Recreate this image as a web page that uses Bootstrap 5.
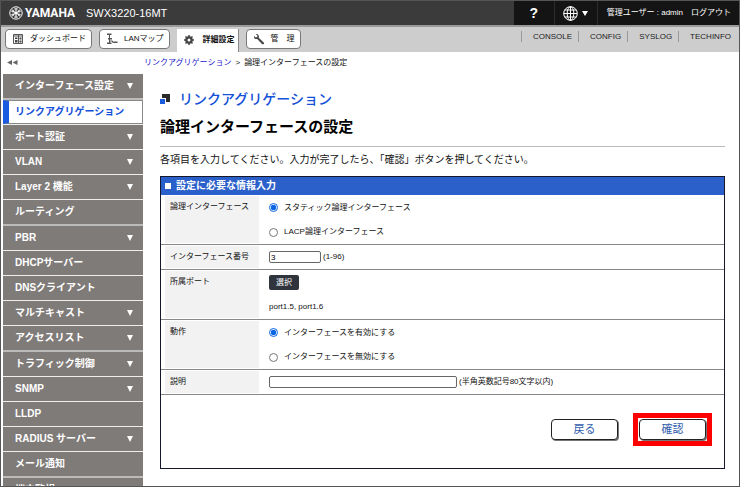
<!DOCTYPE html>
<html lang="ja">
<head>
<meta charset="utf-8">
<meta name="viewport" content="width=device-width, initial-scale=1">
<title>SWX3220-16MT</title>
<link href="https://cdn.jsdelivr.net/npm/bootstrap@5.3.0/dist/css/bootstrap.min.css" rel="stylesheet">
<style>
  body { font-family: "Liberation Sans", "Noto Sans CJK JP", sans-serif; font-size: 8px; line-height: 12px; color: #111; background: #fff; }
  a { text-decoration: none; }
  .frame { border: 1px solid #555; }
  .topbar { height: 24px; background: #3b3b3b; color: #fff; }
  .brand-mark { width: 14px; height: 14px; }
  .brand-name { font-family: Roboto, "Liberation Sans", sans-serif; font-size: 12px; font-weight: 700; width: 53px; margin-left: 2px; }
  .model { font-size: 11px; margin-left: 8px; }
  .tools { background: #141414; }
  .tool-btn { border: 0; border-right: 1px solid #2c2c2c; background: transparent; color: #fff; padding: 0; }
  .help { width: 41px; font-size: 14px; font-weight: 700; }
  .lang { width: 43px; }
  .user { padding: 0 8px 0 9px; gap: 8px; }
  .tabs { height: 27px; background: #cdcdcd; border-top: 2px solid #9a9a9a; padding: 2px 8px 0 4px; gap: 7px; }
  .tab { height: 20px; background: #fff; border: 1px solid #777; border-radius: 4px; color: #111; gap: 6px; padding: 0 5px 0 6px; }
  .tab svg { width: 12px; height: 12px; flex: none; }
  .tab-on { height: 23px; border: 0; border-right: 1px solid #888; border-radius: 0; font-weight: 700; padding: 0 3px 2px 6px; gap: 8px; }
  .links { height: 14px; }
  .links a { color: #222; line-height: 11px; border-left: 1px solid #999; padding-left: 11px; margin-left: 6px; }
  .side { width: 142px; padding-left: 2px; }
  .fold { height: 22px; border: 0; background: transparent; padding: 0 4px; text-align: left; }
  .menu { font-size: 10px; font-weight: 700; overflow-y: auto; scrollbar-width: none; }
  .menu::-webkit-scrollbar { display: none; }
  .menu li { border-bottom: 1px solid #eee; flex: none; }
  .menu li:nth-child(5n+1) { border-bottom: 2px solid #bbb; }
  .menu a { height: 24px; background: #7f7b79; color: #fff; padding: 0 10px 0 12px; }
  .menu a.here { background: #fff; color: #1450d8; border: 1px solid #888; border-left: 6px solid #1b5be0; padding-left: 6px; }
  .crumbs { height: 22px; padding-left: 1px; }
  .crumbs a { color: #1a1acc; }
  .content { padding: 15px 14px 16px 17px; }
  .page-name { font-size: 14px; line-height: 20px; color: #1450d8; gap: 9px; margin: 0; font-weight: 500; }
  .page-name svg { width: 10px; height: 10px; }
  .page-title { font-size: 15px; line-height: 20px; font-weight: 700; margin: 8px 0 9px; color: #000; }
  .lead-in { font-size: 10px; line-height: 14px; border-top: 1px solid #bbb; padding: 6px 0 9px; margin: 0; }
  .panel { border: 1px solid #14182a; }
  .panel-head { background: #2b5fc9; color: #fff; font-size: 10px; font-weight: 700; line-height: 18px; gap: 5px; padding-left: 4px; margin: 0; }
  .sq { width: 6px; height: 6px; background: #fff; }
  .form-row { border-bottom: 1px solid #888; padding-left: 4px; }
  .form-key { width: 94px; background: #f2f2f2; padding: 0 5px; line-height: 22px; margin: 1px 0; }
  .form-val { padding-left: 10px; }
  .ln { height: 25px; }
  .ln:last-child { height: 24px; }
  .ln input[type=radio] { width: 9px; height: 9px; margin: 0 6px 0 0; accent-color: #0b66e4; }
  .box { height: 12px; border: 1px solid #666; border-radius: 2px; padding: 0 1px; font-size: 8px; line-height: 10px; margin-right: 2px; }
  .num { width: 52px; }
  .desc { width: 188px; }
  .pick { width: 30px; height: 15px; border: 0; border-radius: 2px; background: #30343c; color: #fff; padding: 0; }
  .actions { padding: 24px 18px 28px; gap: 21px; }
  .act { width: 67px; height: 21px; border: 1px solid #222; border-radius: 4px; background: #fff; color: #2f5dab; font-size: 11px; line-height: 19px; padding: 0; box-shadow: 1px 1px 0 #777; }
  .spot { outline: 5px solid #f00; outline-offset: 1px; }
</style>
<script src="https://cdn.jsdelivr.net/npm/bootstrap@5.3.0/dist/js/bootstrap.bundle.min.js"></script>
</head>
<body>
<div class="frame vh-100 d-flex flex-column overflow-hidden">
  <header class="topbar d-flex flex-shrink-0">
    <div class="d-flex align-items-center ps-2 flex-fill">
      <svg class="brand-mark" viewBox="0 0 14 14" fill="none" stroke="#fff"><circle cx="7" cy="7" r="6.2" stroke-width="1"/><path d="M7 7V2M7 7l4.3-2.5M7 7l4.3 2.5M7 7v5M7 7L2.7 9.5M7 7L2.7 4.5" stroke-width="1.1"/><path d="M6 2v2M8 2v2M6 12v-2M8 12v-2M2.3 5.3l2 1M3.4 3.8l1.7 1M11.7 5.3l-2 1M10.6 3.8l-1.7 1M2.3 8.7l2-1M3.4 10.2l1.7-1M11.7 8.7l-2-1M10.6 10.2l-1.7-1" stroke-width=".7"/></svg>
      <span class="brand-name">YAMAHA</span>
      <span class="model">SWX3220-16MT</span>
    </div>
    <div class="tools d-flex">
      <button type="button" class="tool-btn help">?</button>
      <button type="button" class="tool-btn lang d-flex align-items-center justify-content-center gap-1" aria-label="Language">
        <svg width="15" height="15" viewBox="0 0 15 15" fill="none" stroke="#fff" stroke-width="1"><circle cx="7.500" cy="7.500" r="6.800"/><ellipse cx="7.500" cy="7.500" rx="3.300" ry="6.800"/><path d="M7.500 .7v13.600M.7 7.500h13.600M1.700 4h11.600M1.700 11h11.600"/></svg>
        <svg width="6" height="5" viewBox="0 0 6 5"><path d="M0 0h6L3 5z" fill="#fff"/></svg>
      </button>
      <div class="user d-flex align-items-center"><span>管理ユーザー : admin</span><a href="#" class="text-white">ログアウト</a></div>
    </div>
  </header>

  <nav class="tabs d-flex flex-shrink-0">
    <a href="#" class="tab d-flex align-items-center"><svg viewBox="0 0 12 12"><path d="M1.500 1.500h9v9h-9z" fill="#fff" stroke="#555"/><path d="M1 3h10M6.500 2v9" stroke="#555"/><path d="M3 4.500h2.500v1.500H3zM3 7h2.500v2.500H3zM7.500 4.500h2v2h-2zM7.500 7.500h2v2h-2z" fill="#444"/></svg>ダッシュボード</a>
    <a href="#" class="tab d-flex align-items-center"><svg viewBox="0 0 12 12"><path d="M1 .5h4.500v1.500H1zM2 5h4v1.500H2zM1 9.500h4.500V11H1zM7.500 8.500h4V10h-4z" fill="#555"/><path d="M3.500 1.500v8.500M3.500 8h3v1.300h2" stroke="#555" fill="none"/></svg>LANマップ</a>
    <a href="#" class="tab tab-on d-flex align-items-center" aria-current="page"><svg viewBox="0 0 12 12" fill="none" stroke="#444"><circle cx="6" cy="6" r="2.800" stroke-width="2"/><path d="M6 1v10M1 6h10M2.500 2.500l7 7M9.500 2.500l-7 7" stroke-width="1.500"/><circle cx="6" cy="6" r="1.500" fill="#fff" stroke="none"/></svg>詳細設定</a>
    <a href="#" class="tab d-flex align-items-center"><svg viewBox="0 0 12 12"><path d="M3 1.200l1.500 1.500-.4 1.400-1.400.4L1.200 3C.7 4.500 1.300 5.700 2.400 6c.7.200 1.300.1 1.800-.1L9 11c.6.500 1.300.400 1.700 0 .4-.400.5-1 0-1.500L5.700 4.800c.3-.7.300-1.400 0-2.100C5.200 1.500 4.100.9 3 1.200z" fill="#444"/></svg>管　理</a>
    <div class="links d-flex align-items-center ms-auto">
      <a href="#">CONSOLE</a><a href="#">CONFIG</a><a href="#">SYSLOG</a><a href="#">TECHINFO</a>
    </div>
  </nav>

  <div class="d-flex flex-fill overflow-hidden">
    <aside class="side d-flex flex-column flex-shrink-0">
      <button type="button" class="fold flex-shrink-0" aria-label="メニューを閉じる"><svg width="11" height="5" viewBox="0 0 11 5"><path d="M5 0v5L0 2.500zM10.500 0v5l-5-2.500z" fill="#666"/></svg></button>
      <ul class="menu list-unstyled m-0 d-flex flex-column flex-fill">
        <li><a href="#" class="d-flex align-items-center justify-content-between">インターフェース設定<svg width="6" height="6" viewBox="0 0 6 6"><path d="M0 0h6L3 6z" fill="#fff"/></svg></a></li>
        <li><a href="#" class="here d-flex align-items-center">リンクアグリゲーション</a></li>
        <li><a href="#" class="d-flex align-items-center justify-content-between">ポート認証<svg width="6" height="6" viewBox="0 0 6 6"><path d="M0 0h6L3 6z" fill="#fff"/></svg></a></li>
        <li><a href="#" class="d-flex align-items-center justify-content-between">VLAN<svg width="6" height="6" viewBox="0 0 6 6"><path d="M0 0h6L3 6z" fill="#fff"/></svg></a></li>
        <li><a href="#" class="d-flex align-items-center justify-content-between">Layer 2 機能<svg width="6" height="6" viewBox="0 0 6 6"><path d="M0 0h6L3 6z" fill="#fff"/></svg></a></li>
        <li><a href="#" class="d-flex align-items-center">ルーティング</a></li>
        <li><a href="#" class="d-flex align-items-center justify-content-between">PBR<svg width="6" height="6" viewBox="0 0 6 6"><path d="M0 0h6L3 6z" fill="#fff"/></svg></a></li>
        <li><a href="#" class="d-flex align-items-center">DHCPサーバー</a></li>
        <li><a href="#" class="d-flex align-items-center">DNSクライアント</a></li>
        <li><a href="#" class="d-flex align-items-center justify-content-between">マルチキャスト<svg width="6" height="6" viewBox="0 0 6 6"><path d="M0 0h6L3 6z" fill="#fff"/></svg></a></li>
        <li><a href="#" class="d-flex align-items-center justify-content-between">アクセスリスト<svg width="6" height="6" viewBox="0 0 6 6"><path d="M0 0h6L3 6z" fill="#fff"/></svg></a></li>
        <li><a href="#" class="d-flex align-items-center justify-content-between">トラフィック制御<svg width="6" height="6" viewBox="0 0 6 6"><path d="M0 0h6L3 6z" fill="#fff"/></svg></a></li>
        <li><a href="#" class="d-flex align-items-center justify-content-between">SNMP<svg width="6" height="6" viewBox="0 0 6 6"><path d="M0 0h6L3 6z" fill="#fff"/></svg></a></li>
        <li><a href="#" class="d-flex align-items-center">LLDP</a></li>
        <li><a href="#" class="d-flex align-items-center justify-content-between">RADIUS サーバー<svg width="6" height="6" viewBox="0 0 6 6"><path d="M0 0h6L3 6z" fill="#fff"/></svg></a></li>
        <li><a href="#" class="d-flex align-items-center">メール通知</a></li>
        <li><a href="#" class="d-flex align-items-center">端末監視</a></li>
      </ul>
    </aside>

    <main class="flex-fill overflow-auto">
      <div class="crumbs d-flex align-items-center gap-1"><a href="#">リンクアグリゲーション</a><span>&gt;</span><span>論理インターフェースの設定</span></div>
      <div class="content">
        <h1 class="page-name d-flex align-items-center"><svg viewBox="0 0 10 10"><path d="M2 0h8v8H2z" fill="#2a2a2a"/><path d="M0 4h6v6H0z" fill="#fff"/><path d="M0 5h5v5H0z" fill="#1b5be0"/></svg>リンクアグリゲーション</h1>
        <h2 class="page-title">論理インターフェースの設定</h2>
        <p class="lead-in">各項目を入力してください。入力が完了したら、「確認」ボタンを押してください。</p>
        <form class="panel" onsubmit="return false">
          <h3 class="panel-head d-flex align-items-center"><span class="sq"></span>設定に必要な情報入力</h3>
          <div class="form-row d-flex">
            <div class="form-key">論理インターフェース</div>
            <div class="form-val">
              <div class="ln d-flex align-items-center"><input type="radio" name="kind" id="k1" checked><label for="k1">スタティック論理インターフェース</label></div>
              <div class="ln d-flex align-items-center"><input type="radio" name="kind" id="k2"><label for="k2">LACP論理インターフェース</label></div>
            </div>
          </div>
          <div class="form-row d-flex">
            <label class="form-key" for="num">インターフェース番号</label>
            <div class="form-val"><div class="ln d-flex align-items-center"><input type="text" class="box num" id="num" value="3"><span>(1-96)</span></div></div>
          </div>
          <div class="form-row d-flex">
            <div class="form-key">所属ポート</div>
            <div class="form-val">
              <div class="ln d-flex align-items-center"><button type="button" class="pick">選択</button></div>
              <div class="ln d-flex align-items-center">port1.5, port1.6</div>
            </div>
          </div>
          <div class="form-row d-flex">
            <div class="form-key">動作</div>
            <div class="form-val">
              <div class="ln d-flex align-items-center"><input type="radio" name="state" id="s1" checked><label for="s1">インターフェースを有効にする</label></div>
              <div class="ln d-flex align-items-center"><input type="radio" name="state" id="s2"><label for="s2">インターフェースを無効にする</label></div>
            </div>
          </div>
          <div class="form-row d-flex">
            <label class="form-key" for="desc">説明</label>
            <div class="form-val"><div class="ln d-flex align-items-center"><input type="text" class="box desc" id="desc"><span>(半角英数記号80文字以内)</span></div></div>
          </div>
          <div class="actions d-flex justify-content-end">
            <button type="button" class="act">戻る</button>
            <div class="spot"><button type="submit" class="act d-block">確認</button></div>
          </div>
        </form>
      </div>
    </main>
  </div>
</div>
</body>
</html>
